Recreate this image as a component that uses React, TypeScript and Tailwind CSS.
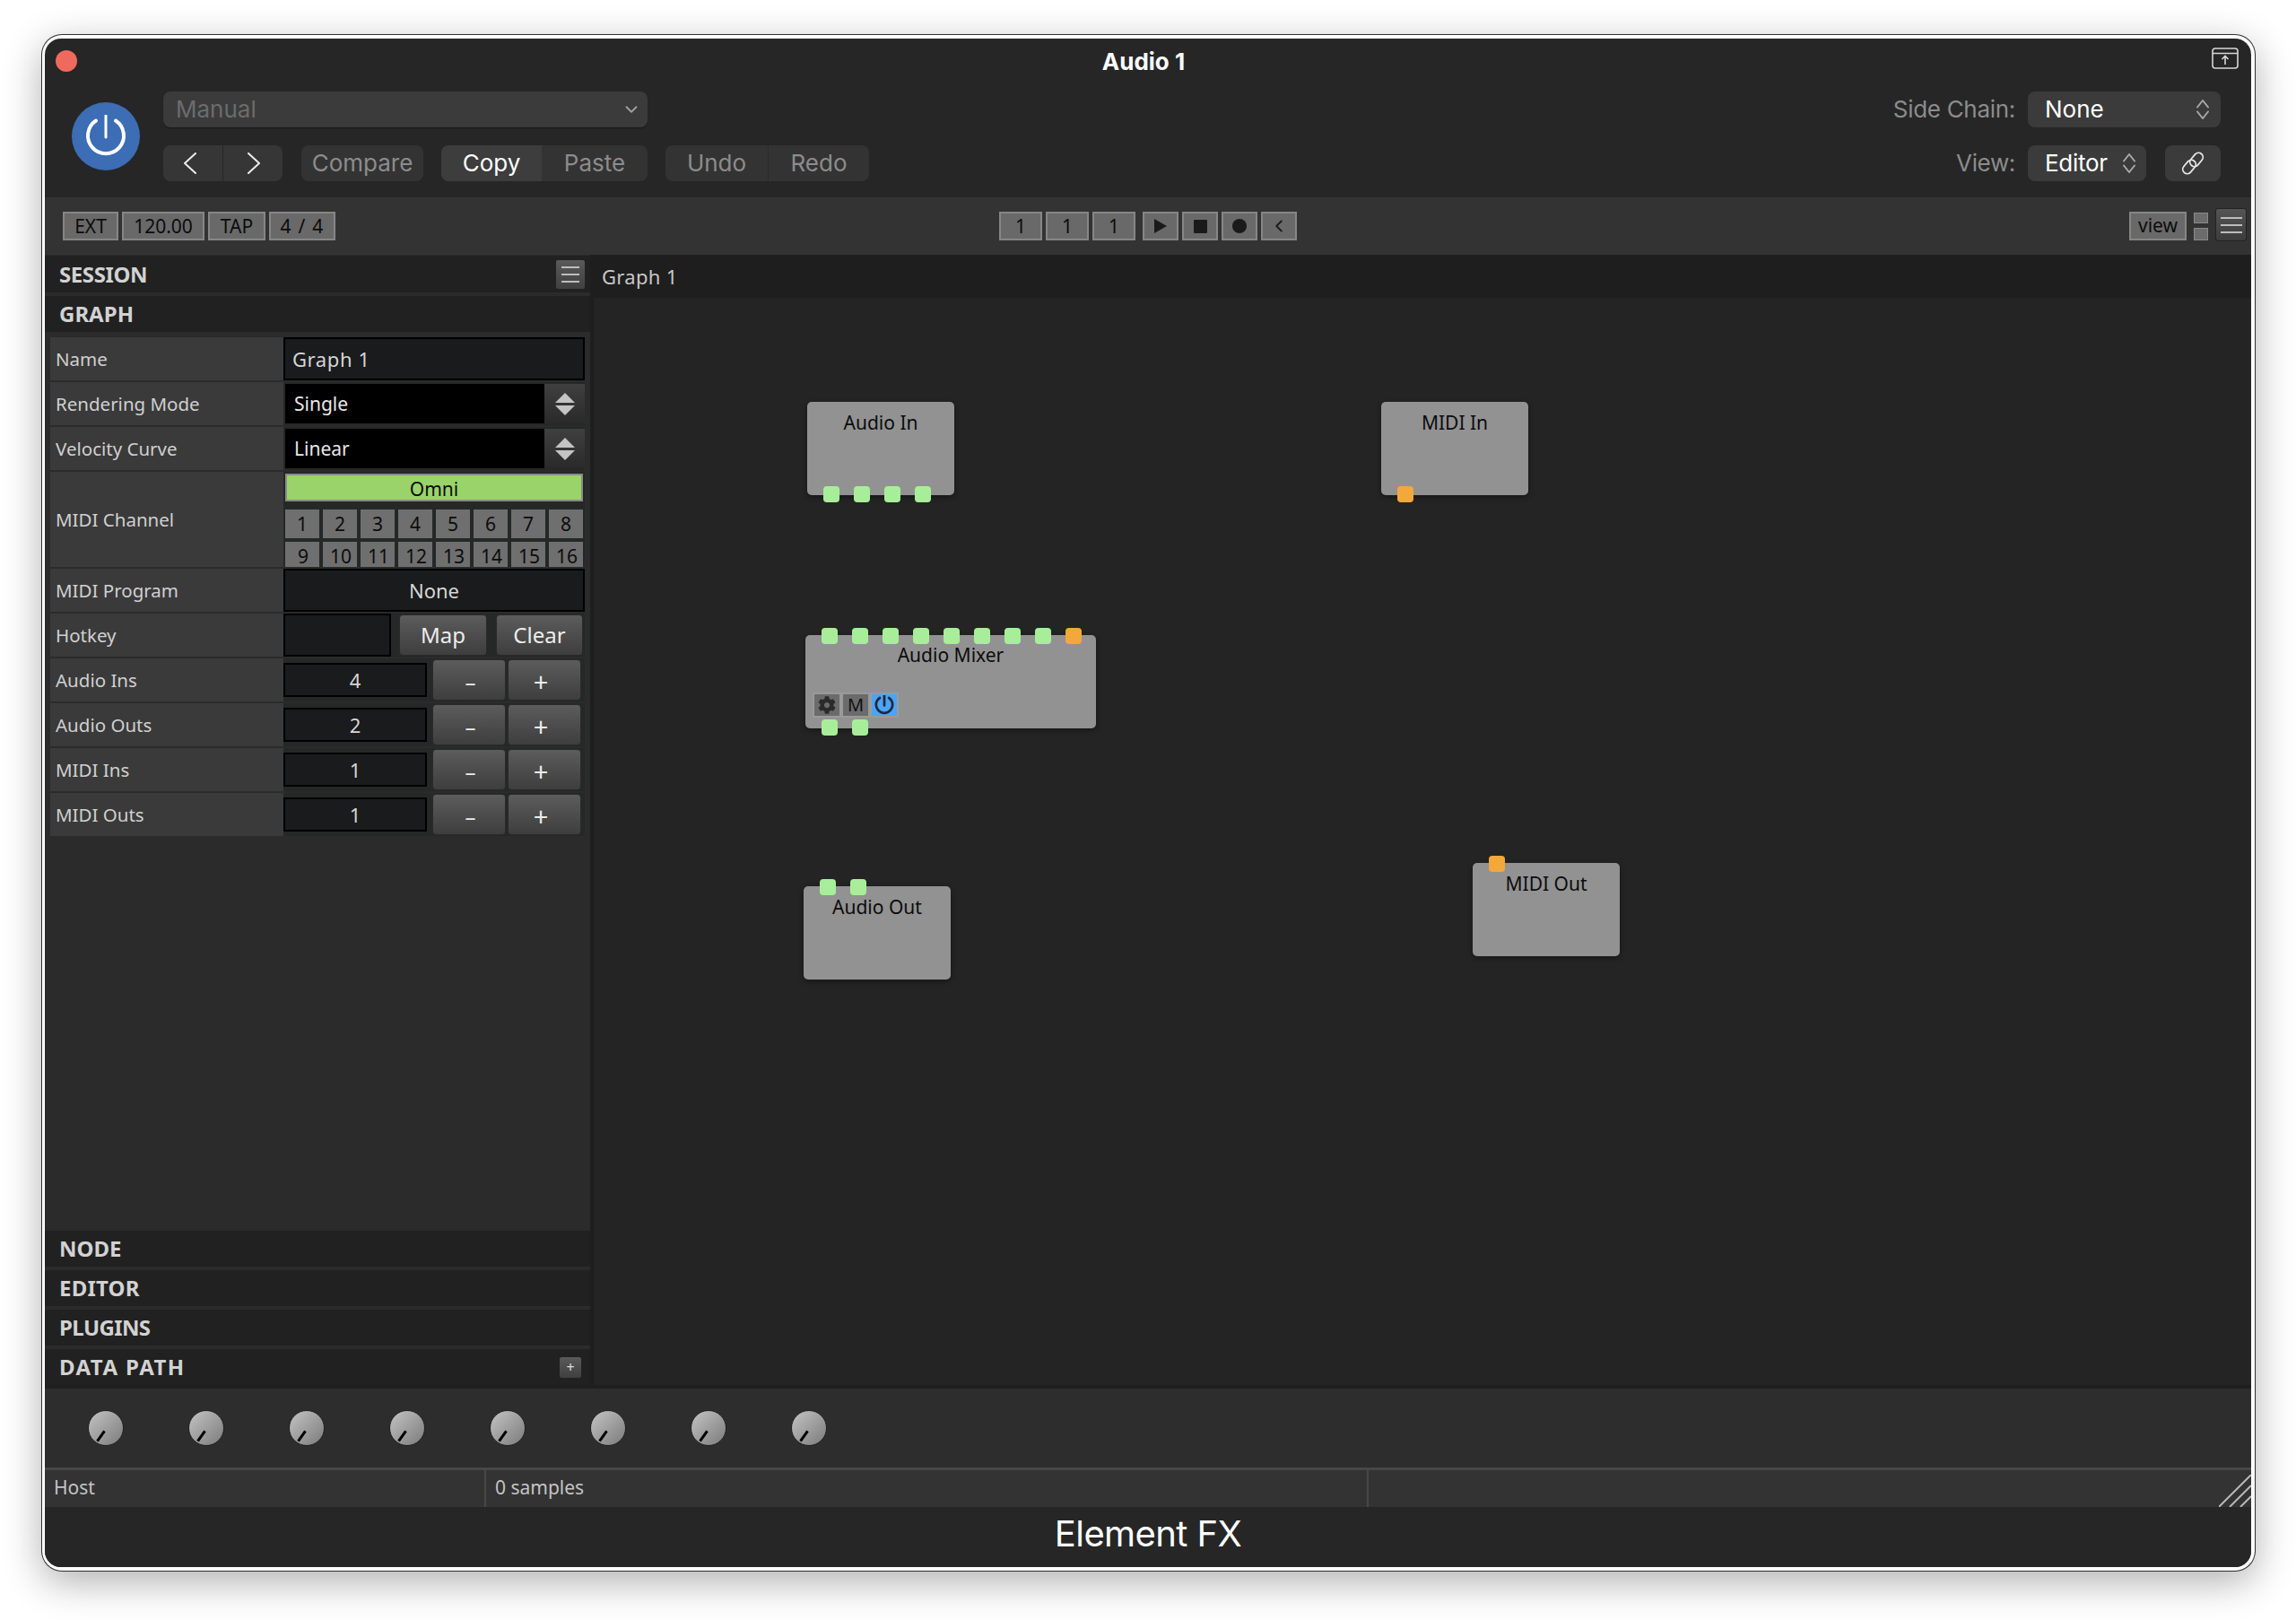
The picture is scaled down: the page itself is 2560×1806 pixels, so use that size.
import { ChevronDown, ChevronLeft } from "lucide-react";
import { FaCog } from "react-icons/fa";

const juce = "font-['Noto_Sans',sans-serif]";
const sf = "font-['Inter',sans-serif]";

function PowerGlyph({ className, bold = false }: { className: string; bold?: boolean }) {
  return (
    <svg viewBox="0 0 48 48" className={className} fill="none" stroke="currentColor" strokeLinecap="round">
      <path d="M24 1v24" strokeWidth={bold ? 6 : 3} />
      <path d="M13 6.5a20 20 0 1 0 22 0" strokeWidth={bold ? 6 : 4} />
    </svg>
  );
}

function UpDown({ className }: { className: string }) {
  return (
    <svg viewBox="0 0 16 24" className={className} fill="none" stroke="#a8a8a8" strokeWidth="2" strokeLinecap="round" strokeLinejoin="round">
      <path d="M2 9.5 8 2l6 7.5M2 14.5 8 22l6-7.5" />
    </svg>
  );
}

function NavChevron({ dir }: { dir: "left" | "right" }) {
  return (
    <svg viewBox="0 0 16 24" className="h-[24px] w-[16px]" fill="none" stroke="#ececec" strokeWidth="2" strokeLinecap="round" strokeLinejoin="round">
      <path d={dir === "left" ? "M14 1 2 12l12 11" : "M2 1l12 11L2 23"} />
    </svg>
  );
}

function MenuLines({ className }: { className: string }) {
  return (
    <div className={`flex flex-col ${className}`}>
      <span className="h-[2px] bg-[#bdbdbd]" />
      <span className="h-[2px] bg-[#bdbdbd]" />
      <span className="h-[2px] bg-[#bdbdbd]" />
    </div>
  );
}

function TBtn({ w, className = "", children }: { w: string; className?: string; children: React.ReactNode }) {
  return (
    <div className={`flex h-[32px] ${w} items-center justify-center border-2 border-[#868686] bg-[#696969] text-[21px] text-[#0c0c0c] ${juce} ${className}`}>
      {children}
    </div>
  );
}

function SideHeader({ title, track = "", children, className = "" }: { title: string; track?: string; children?: React.ReactNode; className?: string }) {
  return (
    <div className={`flex h-[40px] shrink-0 items-center justify-between bg-[#212121] pl-[16px] ${className}`}>
      <span className={`text-[24px] font-bold text-[#d2d2d2] ${track} ${juce}`}>{title}</span>
      {children}
    </div>
  );
}

function Row({ label, h = "h-[48px]", children }: { label: string; h?: string; children: React.ReactNode }) {
  return (
    <div className={`flex ${h} bg-[#262727]`}>
      <div className={`flex w-[260px] shrink-0 items-center bg-[#3a3a3a] pl-[6px] text-[20.5px] text-[#d0d0d0] ${juce}`}>{label}</div>
      <div className="min-w-0 flex-1">{children}</div>
    </div>
  );
}

function Combo({ value }: { value: string }) {
  return (
    <div className="flex h-full items-center py-[2px] pl-[2px]">
      <div className={`flex h-[44px] flex-1 items-center bg-black pl-[10px] pt-[2px] text-[21px] text-[#e8e8e8] ${juce}`}>{value}</div>
      <div className="flex h-full w-[45px] flex-col items-center justify-center gap-[3px] bg-linear-to-b from-[#404040] to-[#2a2a2a]">
        <div className="h-0 w-0 border-x-[11px] border-b-[11px] border-x-transparent border-b-[#c4c4c4]" />
        <div className="h-0 w-0 border-x-[11px] border-t-[11px] border-x-transparent border-t-[#c4c4c4]" />
      </div>
    </div>
  );
}

function GrayBtn({ className, children }: { className: string; children: React.ReactNode }) {
  return (
    <div className={`flex items-center justify-center rounded-[4px] border border-[#2a2a2a] bg-linear-to-b from-[#5c5c5c] to-[#3e3e3e] text-[#ededed] ${juce} ${className}`}>
      {children}
    </div>
  );
}

function Counter({ value }: { value: string }) {
  return (
    <div className="flex h-full items-center">
      <div className={`flex h-[38px] w-[160px] items-center justify-center border-2 border-black bg-[#1a1b1c] text-[22px] text-[#d6d6d6] ${juce}`}>{value}</div>
      <GrayBtn className="ml-[6px] h-[46px] w-[82px] pl-[3px] pt-[3px] text-[24px]">–</GrayBtn>
      <GrayBtn className="ml-[2px] h-[46px] w-[82px] pr-[8px] pt-[3px] text-[29px]">+</GrayBtn>
    </div>
  );
}

function Port({ kind = "audio" }: { kind?: "audio" | "midi" }) {
  return <div className={`h-[18px] w-[18px] rounded-[4px] ${kind === "audio" ? "bg-[#a8ee9a]" : "bg-[#f2a83a]"}`} />;
}

function Ports({ items, className }: { items: ("audio" | "midi")[]; className: string }) {
  return (
    <div className={`absolute left-[18px] flex gap-[16px] ${className}`}>
      {items.map((k, i) => (
        <Port key={i} kind={k} />
      ))}
    </div>
  );
}

function Node({ title, box, top, bottom, titleY = "pt-[10px]", children }: {
  title: string;
  box: string;
  top?: ("audio" | "midi")[];
  bottom?: ("audio" | "midi")[];
  titleY?: string;
  children?: React.ReactNode;
}) {
  return (
    <div className={`absolute h-[104px] rounded-[5px] bg-[#929292] shadow-[0_2px_6px_rgba(0,0,0,0.4)] ${box}`}>
      <div className={`text-center text-[21px] leading-[26px] text-[#0c0c0c] ${juce} ${titleY}`}>{title}</div>
      {top && <Ports items={top} className="-top-[8px]" />}
      {bottom && <Ports items={bottom} className="-bottom-[8px]" />}
      {children}
    </div>
  );
}

function Knob() {
  return (
    <div className="relative h-[40px] w-[40px] rounded-full border border-[#222] bg-linear-to-br from-[#c4c4c4] to-[#7c7c7c]">
      <span className="absolute left-[12px] top-[21px] h-[14px] w-[3px] rotate-[35deg] bg-black" />
    </div>
  );
}

export default function App() {
  return (
    <div className="h-[1806px] w-[2560px] overflow-hidden bg-white pl-[47px] pt-[39px]">
      <div className="flex h-[1712px] w-[2467px] flex-col overflow-hidden rounded-[22px] bg-white pb-[4px] pl-[3px] pr-[4px] pt-[4px] shadow-[0_0_0_1px_#2e2e2e,0_12px_44px_rgba(0,0,0,0.32)]">
        <div className="flex flex-1 flex-col overflow-hidden rounded-[18px] bg-[#262626]">
          {/* host header */}
          <div className={`h-[177px] shrink-0 ${sf}`}>
            <div className="grid h-[50px] grid-cols-[1fr_auto_1fr] items-center">
              <div className="pl-[12px]">
                <div className="h-[24px] w-[24px] rounded-full bg-[#ee6a5f]" />
              </div>
              <div className="mr-[10px] pt-[2px] text-[26px] font-bold leading-none text-white">Audio 1</div>
              <div className="flex justify-end pb-[6px] pr-[14px]">
                <svg viewBox="0 0 30 24" className="h-[24px] w-[30px]" fill="none" stroke="#d8d8d8" strokeWidth="1.6">
                  <rect x="1" y="1" width="28" height="22" rx="3" />
                  <path d="M1 6.5h28M15 19V9.5M11.5 13l3.5-3.5 3.5 3.5" />
                </svg>
              </div>
            </div>
            <div className="flex pl-[30px] pr-[34px] pt-[9px]">
              <div className="mt-[12px] flex h-[76px] w-[76px] items-center justify-center rounded-full bg-[#3c6db5] text-white">
                <PowerGlyph className="h-[48px] w-[48px]" />
              </div>
              <div className="ml-[26px] flex flex-col gap-[20px]">
                <div className="flex h-[40px] w-[540px] items-center justify-between rounded-[8px] bg-[#3b3b3b] pl-[14px] pr-[7px] text-[26px] text-[#6c6c6c] shadow-[0_1px_1px_rgba(0,0,0,0.4)]">
                  <span className="pb-[2px]">Manual</span>
                  <ChevronDown className="h-[22px] w-[22px] text-[#a0a0a0]" strokeWidth={2} />
                </div>
                <div className="flex h-[40px] text-[26px] text-[#8c8c8c]">
                  <div className="flex w-[133px] rounded-[8px] bg-[#363636]">
                    <div className="flex w-[67px] items-center justify-center border-r border-[#262626] pr-[6px]">
                      <NavChevron dir="left" />
                    </div>
                    <div className="flex flex-1 items-center justify-center pl-[2px]">
                      <NavChevron dir="right" />
                    </div>
                  </div>
                  <div className="ml-[21px] flex w-[136px] items-center justify-center rounded-[8px] bg-[#333] pb-[2px]">Compare</div>
                  <div className="ml-[20px] flex w-[230px] rounded-[8px] bg-[#333]">
                    <div className="flex w-[112px] items-center justify-center rounded-l-[8px] bg-[#3d3d3d] pb-[2px] text-white">Copy</div>
                    <div className="flex flex-1 items-center justify-center pb-[2px]">Paste</div>
                  </div>
                  <div className="ml-[20px] flex w-[227px] rounded-[8px] bg-[#333]">
                    <div className="flex w-[115px] items-center justify-center border-r border-[#2a2a2a] pb-[2px]">Undo</div>
                    <div className="flex flex-1 items-center justify-center pb-[2px]">Redo</div>
                  </div>
                </div>
              </div>
              <div className="ml-auto flex flex-col gap-[20px] text-[26px]">
                <div className="flex h-[40px] items-center justify-end gap-[14px]">
                  <span className="pb-[2px] tracking-[-0.3px] text-[#8c8c8c]">Side Chain:</span>
                  <div className="flex h-[40px] w-[215px] items-center justify-between rounded-[8px] bg-[#3b3b3b] pl-[19px] pr-[12px] text-white">
                    <span className="pb-[2px]">None</span>
                    <UpDown className="h-[24px] w-[16px]" />
                  </div>
                </div>
                <div className="flex h-[40px] items-center justify-end">
                  <span className="pb-[2px] tracking-[-0.35px] text-[#8c8c8c]">View:</span>
                  <div className="ml-[14px] flex h-[40px] w-[132px] items-center justify-between rounded-[8px] bg-[#3b3b3b] pl-[19px] pr-[11px] text-white">
                    <span className="pb-[2px] tracking-[-0.3px]">Editor</span>
                    <UpDown className="h-[24px] w-[16px]" />
                  </div>
                  <div className="ml-[21px] flex h-[40px] w-[62px] items-center justify-center rounded-[8px] bg-[#3b3b3b]">
                    <svg viewBox="0 0 30 28" className="h-[28px] w-[30px]" fill="none" stroke="#e6e6e6" strokeWidth="1.8">
                      <rect x="14" y="1.5" width="10" height="17" rx="5" transform="rotate(40 19 10)" />
                      <rect x="6" y="9.5" width="10" height="17" rx="5" transform="rotate(40 11 18)" />
                    </svg>
                  </div>
                </div>
              </div>
            </div>
          </div>

          {/* transport */}
          <div className="grid h-[64px] shrink-0 grid-cols-[1fr_auto_1fr] items-center bg-[#333]">
            <div className="flex gap-[4px] pl-[20px]">
              <TBtn w="w-[62px]" className="pt-[1px]">EXT</TBtn>
              <TBtn w="w-[92px]" className="pt-[1px]">120.00</TBtn>
              <TBtn w="w-[64px]" className="pt-[1px]">TAP</TBtn>
              <TBtn w="w-[74px]" className="pt-[1px] tracking-[1.2px]">4 / 4</TBtn>
            </div>
            <div className="flex">
              <TBtn w="w-[48px]" className="pt-[1px]">1</TBtn>
              <div className="ml-[4px]"><TBtn w="w-[48px]" className="pt-[1px]">1</TBtn></div>
              <div className="ml-[4px]"><TBtn w="w-[48px]" className="pt-[1px]">1</TBtn></div>
              <div className="ml-[8px]">
                <TBtn w="w-[40px]"><div className="h-0 w-0 border-y-[8px] border-l-[14px] border-y-transparent border-l-[#1a1a1a]" /></TBtn>
              </div>
              <div className="ml-[4px]"><TBtn w="w-[40px]"><div className="h-[15px] w-[15px] rounded-[1px] bg-[#1a1a1a]" /></TBtn></div>
              <div className="ml-[4px]"><TBtn w="w-[40px]"><div className="h-[16px] w-[16px] rounded-full bg-[#1a1a1a]" /></TBtn></div>
              <div className="ml-[4px]"><TBtn w="w-[40px]"><ChevronLeft className="h-[22px] w-[22px] text-[#1a1a1a]" strokeWidth={2} /></TBtn></div>
            </div>
            <div className="flex items-center justify-end pr-[5px]">
              <TBtn w="w-[64px]">view</TBtn>
              <div className="ml-[8px] flex h-[31px] w-[16px] flex-col justify-between">
                <div className="h-[12px] border border-[#8a8a8a] bg-[#6c6c6c]" />
                <div className="h-[14px] border border-[#8a8a8a] bg-[#6c6c6c]" />
              </div>
              <div className="mb-[3px] ml-[8px] flex h-[37px] w-[35px] items-center justify-center rounded-[3px] border border-[#222] bg-linear-to-b from-[#555] to-[#3c3c3c]">
                <MenuLines className="w-[24px] gap-[6px]" />
              </div>
            </div>
          </div>

          {/* main */}
          <div className="flex h-[1260px] shrink-0 bg-[#1d1e1e]">
            <div className="flex w-[608px] shrink-0 flex-col bg-[#2b2b2b] pt-[1px]">
              <SideHeader title="SESSION" track="tracking-[-0.4px]" className="h-[41px] pr-[5px]">
                <div className="flex h-[34px] w-[34px] items-center justify-center rounded-[3px] border border-[#222] bg-linear-to-b from-[#5a5a5a] to-[#404040]">
                  <MenuLines className="w-[20px] gap-[6px]" />
                </div>
              </SideHeader>
              <SideHeader title="GRAPH" className="mt-[4px]" />
              <div className="mt-[6px] flex flex-col gap-[2px] pl-[6px] pr-[6px]">
                <Row label="Name">
                  <div className={`flex h-full items-center border-2 border-black bg-[#1a1b1c] pl-[8px] text-[22px] tracking-[0.6px] text-[#d6d6d6] ${juce}`}>Graph 1</div>
                </Row>
                <Row label="Rendering Mode"><Combo value="Single" /></Row>
                <Row label="Velocity Curve"><Combo value="Linear" /></Row>
                <Row label="MIDI Channel" h="h-[106px]">
                  <div className="flex flex-col pl-[2px] pr-[2px] pt-[2px]">
                    <div className={`flex h-[31px] items-center justify-center border-2 border-[#8a8a8a] bg-[#9ad36a] pt-[3px] text-[21px] leading-[24px] text-[#0c0c0c] ${juce}`}>Omni</div>
                    <div className={`mt-[9px] grid grid-cols-8 gap-x-[4px] gap-y-[4px] text-[21px] text-[#0c0c0c] ${juce}`}>
                      {["1", "2", "3", "4", "5", "6", "7", "8"].map((n) => (
                        <div key={n} className="flex h-[32px] items-center justify-center bg-[#6f6f6f] pt-[2px]">{n}</div>
                      ))}
                      {["9", "10", "11", "12", "13", "14", "15", "16"].map((n) => (
                        <div key={n} className="flex h-[28px] items-start justify-center bg-[#6f6f6f] pl-[2px] pt-[4px] leading-[24px]">{n}</div>
                      ))}
                    </div>
                  </div>
                </Row>
                <Row label="MIDI Program">
                  <div className={`flex h-full items-center justify-center border-2 border-black bg-[#1a1b1c] text-[22px] text-[#d6d6d6] ${juce}`}>None</div>
                </Row>
                <Row label="Hotkey">
                  <div className="flex h-full items-center">
                    <div className="h-full w-[120px] border-2 border-black bg-[#1a1b1c]" />
                    <GrayBtn className="ml-[9px] h-[46px] w-[98px] text-[24px]">Map</GrayBtn>
                    <GrayBtn className="ml-[10px] h-[46px] w-[97px] text-[24px]">Clear</GrayBtn>
                  </div>
                </Row>
                <Row label="Audio Ins"><Counter value="4" /></Row>
                <Row label="Audio Outs"><Counter value="2" /></Row>
                <Row label="MIDI Ins"><Counter value="1" /></Row>
                <Row label="MIDI Outs"><Counter value="1" /></Row>
              </div>
              <div className="mt-auto flex flex-col gap-[4px]">
                <SideHeader title="NODE" />
                <SideHeader title="EDITOR" track="tracking-[0.2px]" />
                <SideHeader title="PLUGINS" track="tracking-[-0.6px]" />
                <SideHeader title="DATA PATH" track="tracking-[1.4px]" className="pr-[9px]">
                  <div className="flex h-[25px] w-[26px] items-center justify-center rounded-[3px] border border-[#222] bg-linear-to-b from-[#5a5a5a] to-[#404040] text-[16px] leading-none text-[#ddd]">+</div>
                </SideHeader>
              </div>
            </div>
            <div className="ml-[4px] flex flex-1 flex-col">
              <div className={`flex h-[48px] shrink-0 items-center bg-[#1e1e1e] pl-[9px] text-[22px] tracking-[0.3px] text-[#c8c8c8] ${juce}`}>Graph 1</div>
              <div className="relative flex-1 bg-[#242424]">
                <Node title="Audio In" box="left-[238px] top-[116px] w-[164px]" bottom={["audio", "audio", "audio", "audio"]} />
                <Node title="MIDI In" box="left-[878px] top-[116px] w-[164px]" bottom={["midi"]} />
                <Node
                  title="Audio Mixer"
                  box="left-[236px] top-[376px] w-[324px]"
                  titleY="pt-[9px]"
                  top={["audio", "audio", "audio", "audio", "audio", "audio", "audio", "audio", "midi"]}
                  bottom={["audio", "audio"]}
                >
                  <div className="absolute left-[8px] top-[64px] flex h-[28px] items-center gap-[4px] bg-[#9a9a9a] px-[2px]">
                    <div className="flex h-[24px] w-[28px] items-center justify-center bg-[#6b6b6b] text-[#2a2a2a]">
                      <FaCog className="h-[20px] w-[20px]" />
                    </div>
                    <div className={`flex h-[24px] w-[28px] items-center justify-center bg-[#6b6b6b] text-[20px] text-[#111] ${juce}`}>M</div>
                    <div className="flex h-[24px] w-[28px] items-center justify-center bg-[#4da3f5] text-[#1f2a36]">
                      <PowerGlyph className="h-[22px] w-[22px]" bold />
                    </div>
                  </div>
                </Node>
                <Node title="Audio Out" box="left-[234px] top-[656px] w-[164px]" top={["audio", "audio"]} />
                <Node title="MIDI Out" box="left-[980px] top-[630px] w-[164px]" top={["midi"]} />
              </div>
            </div>
          </div>

          {/* knobs */}
          <div className="flex h-[92px] shrink-0 items-center gap-[72px] border-t-4 border-[#1f1f1f] bg-[#2d2d2d] pl-[48px]">
            {[0, 1, 2, 3, 4, 5, 6, 7].map((i) => (
              <Knob key={i} />
            ))}
          </div>

          {/* status */}
          <div className={`relative flex h-[44px] shrink-0 border-t-[3px] border-[#474747] bg-[#333] text-[21px] text-[#c4c4c4] ${juce}`}>
            <div className="flex w-[492px] items-center border-r-2 border-[#474747] pb-[2px] pl-[10px]">Host</div>
            <div className="flex w-[984px] items-center border-r-2 border-[#474747] pb-[2px] pl-[10px]">0 samples</div>
            <svg viewBox="0 0 36 36" className="absolute bottom-0 right-0 h-[36px] w-[36px]" stroke="#b8b8b8" strokeWidth="2">
              <path d="M0 36 36 0M12 36 36 12M24 36 36 24" />
            </svg>
          </div>

          {/* footer */}
          <div className="flex flex-1 items-center justify-center bg-[#262626] pb-[8px] font-['Inter',sans-serif] text-[40px] font-normal tracking-[-0.6px] text-white">
            Element FX
          </div>
        </div>
      </div>
    </div>
  );
}
